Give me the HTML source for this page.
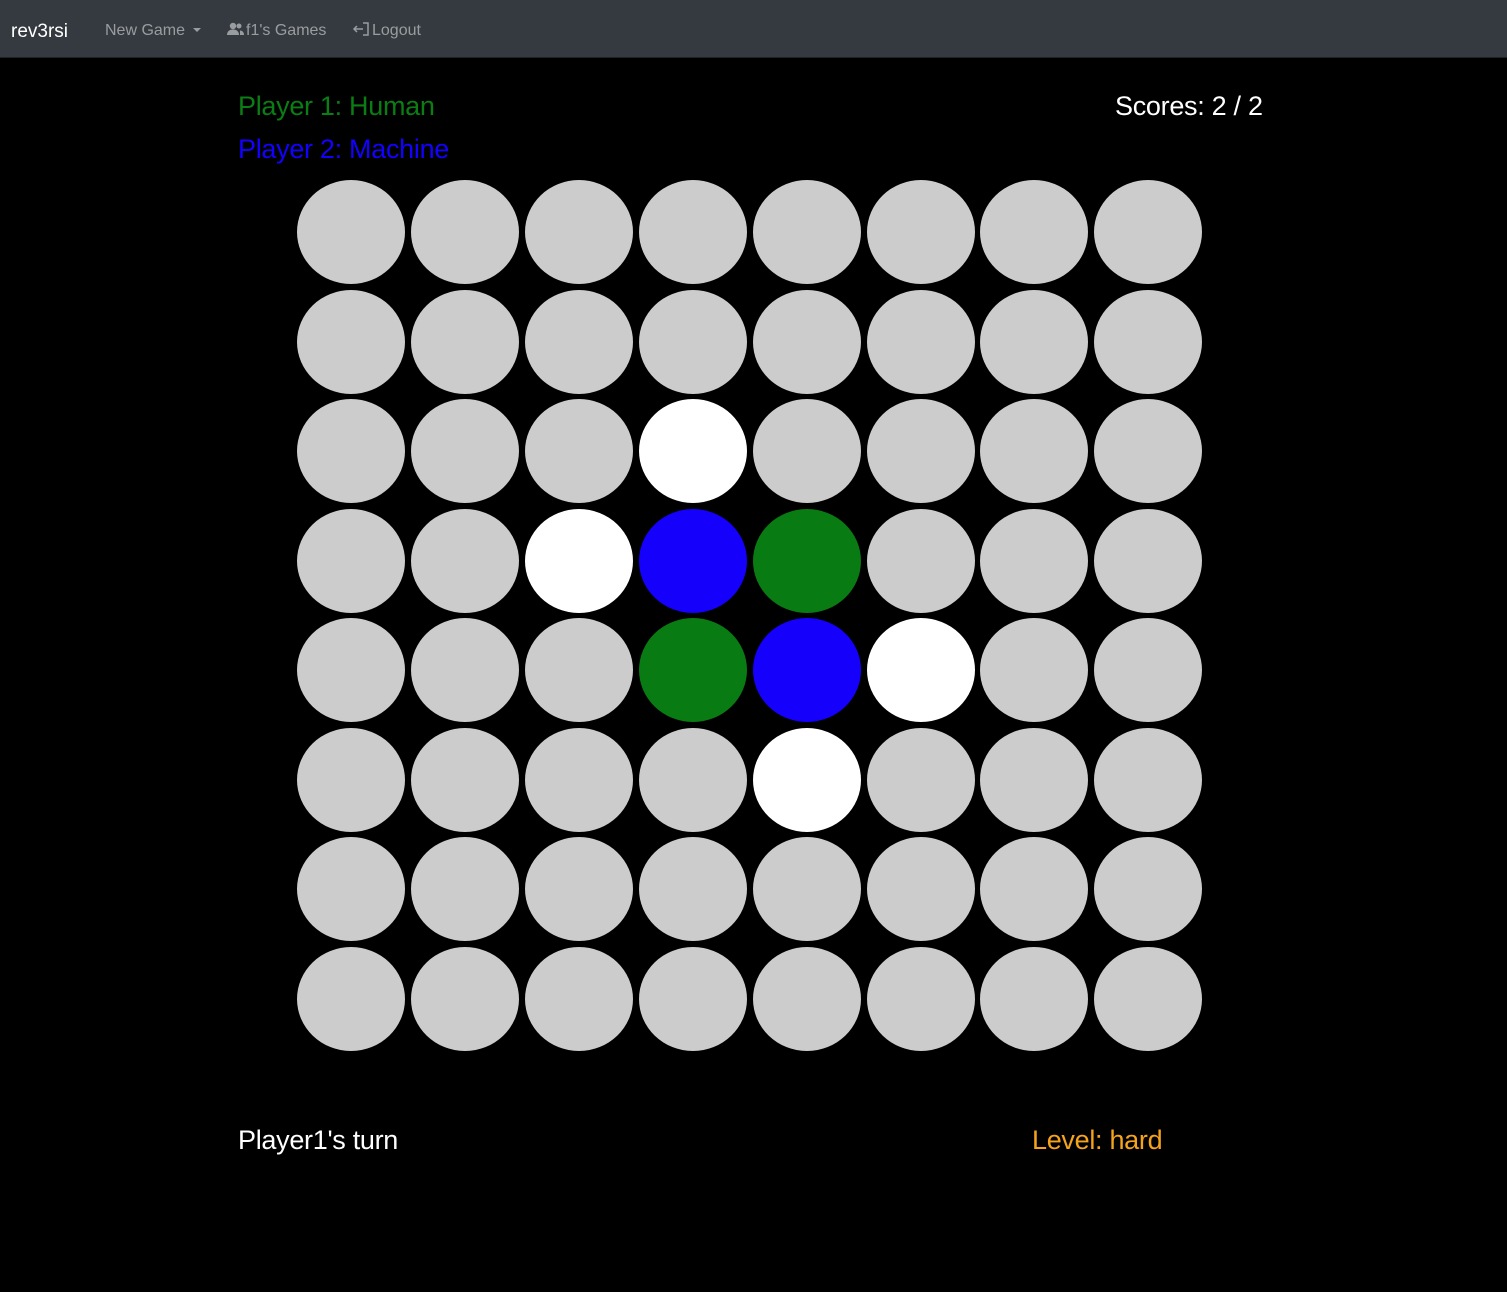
<!DOCTYPE html>
<html><head><style>
body{margin:0;background:#000;width:1507px;height:1292px;overflow:hidden;font-family:"Liberation Sans",sans-serif;position:relative}
.nav{position:absolute;left:0;top:0;width:1507px;height:57px;background:#343a40;border-bottom:1px solid #222}
.nav span{position:absolute;top:22px;font-size:16px;color:#9a9da0;white-space:nowrap}
.t{position:absolute;font-size:27px;white-space:nowrap;letter-spacing:-0.3px}
.c{position:absolute;width:108px;height:104px;border-radius:50%;background:#ccc}
</style></head><body>
<div class="nav">
<span style="left:11px;top:21px;font-size:19px;color:#fff">rev3rsi</span>
<span style="left:105px">New Game <span style="position:relative;top:-3px;display:inline-block;margin-left:4px;border-left:4px solid transparent;border-right:4px solid transparent;border-top:4px solid #9a9da0"></span></span>
<span style="left:226px"><svg width="20" height="14" viewBox="0 0 18 14" style="vertical-align:-1px"><circle cx="6" cy="4" r="3.2" fill="#9a9da0"/><path d="M0 13c0-4 3-5.5 6-5.5s6 1.5 6 5.5z" fill="#9a9da0"/><circle cx="12" cy="4" r="2.5" fill="#9a9da0"/><path d="M13 13h4c0-3-2-4.5-4-4.5z" fill="#9a9da0"/></svg>f1's Games</span>
<span style="left:352px"><svg width="20" height="14" viewBox="0 0 18 14" style="vertical-align:-1px"><path d="M10 1h5v12h-5M1 7h9M4 4L1 7l3 3" stroke="#9a9da0" stroke-width="1.5" fill="none"/></svg>Logout</span>
</div>
<div class="t" style="left:238px;top:91px;color:#0a7d14">Player 1: Human</div>
<div class="t" style="left:238px;top:134px;color:#1400ff">Player 2: Machine</div>
<div class="t" style="left:1115px;top:91px;color:#fff">Scores: 2 / 2</div>
<div class="t" style="left:238px;top:1125px;color:#fff">Player1's turn</div>
<div class="t" style="left:1032px;top:1125px;color:#f5a21c">Level: hard</div>
<div id="g"></div>
<script>
var s={"2,3":"#fff","3,2":"#fff","3,3":"#1400fb","3,4":"#097b13","4,3":"#097b13","4,4":"#1400fb","4,5":"#fff","5,4":"#fff"},h="";
for(var r=0;r<8;r++)for(var c=0;c<8;c++){var col=s[r+","+c]||"#ccc";h+='<div class="c" style="left:'+(297+c*113.9)+'px;top:'+(180+r*109.5)+'px;background:'+col+'"></div>';}
document.getElementById("g").innerHTML=h;
</script>
</body></html>
